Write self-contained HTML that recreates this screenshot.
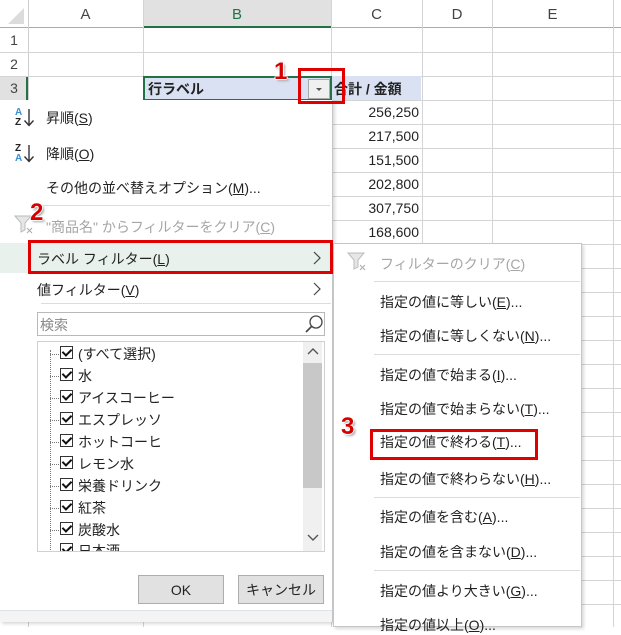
<!DOCTYPE html>
<html><head><meta charset="utf-8"><style>
*{margin:0;padding:0;box-sizing:border-box}
body{width:621px;height:627px;overflow:hidden;background:#fff;position:relative;font-family:"Liberation Sans","Noto Sans CJK JP",sans-serif;font-size:14px;color:#222}
.a{position:absolute}
.hl{position:absolute;height:1px;background:#d4d4d4}
.vl{position:absolute;width:1px;background:#d4d4d4}
.ch{position:absolute;top:0;height:28px;line-height:30px;text-align:center;font-size:15px;color:#444}
.rh{position:absolute;left:0;width:28px;text-align:center;font-size:14px;color:#444}
.num{position:absolute;left:331px;width:88px;text-align:right;font-size:14px;color:#222}
.mi{position:absolute;white-space:nowrap;font-size:14px;color:#222}
.sep{position:absolute;height:1px;background:#dcdcdc}
.red{position:absolute;border:3px solid #e00000}
.badge{position:absolute;color:#d60000;font-weight:bold;font-size:24px;text-shadow:-1px 0 #fff,1px 0 #fff,0 1px #fff,0 -1px #fff,2px 2px 2px #aaa}
.cb{position:absolute;left:60px;width:13px;height:13px;border:1px solid #333;background:#fff}
.cb:after{content:"";position:absolute;left:3px;top:0px;width:4px;height:7px;border:solid #111;border-width:0 2px 2px 0;transform:rotate(45deg)}
.li{position:absolute;left:78px;font-size:14px}
.dot{position:absolute;left:50px;width:9px;border-top:1px dotted #777}
.btn{position:absolute;top:575px;height:29px;background:#e1e1e1;border:1px solid #adadad;text-align:center;line-height:28px;font-size:14px}
</style></head><body>
<div class="a" style="left:0;top:0;width:621px;height:28px;background:#fff;border-bottom:1px solid #ababab"></div>
<div class="a" style="left:8px;top:8px;width:0;height:0;border-left:16px solid transparent;border-bottom:16px solid #dcdcdc"></div>
<div class="a" style="left:143px;top:0;width:188px;height:28px;background:#e1e1e1;border-bottom:2px solid #217346"></div>
<div class="ch" style="left:28px;width:115px">A</div>
<div class="ch" style="left:143px;width:188px;color:#217346">B</div>
<div class="ch" style="left:331px;width:91px">C</div>
<div class="ch" style="left:422px;width:70px">D</div>
<div class="ch" style="left:492px;width:121px">E</div>
<div class="vl" style="left:28px;top:0;height:627px;background:#cfcfcf"></div>
<div class="vl" style="left:143px;top:0;height:627px"></div>
<div class="vl" style="left:331px;top:0;height:627px"></div>
<div class="vl" style="left:422px;top:0;height:627px"></div>
<div class="vl" style="left:492px;top:0;height:627px"></div>
<div class="vl" style="left:613px;top:0;height:627px"></div>
<div class="hl" style="left:0;top:52px;width:621px"></div>
<div class="hl" style="left:0;top:76px;width:621px"></div>
<div class="hl" style="left:0;top:100px;width:621px"></div>
<div class="hl" style="left:0;top:124px;width:621px"></div>
<div class="hl" style="left:0;top:148px;width:621px"></div>
<div class="hl" style="left:0;top:172px;width:621px"></div>
<div class="hl" style="left:0;top:196px;width:621px"></div>
<div class="hl" style="left:0;top:220px;width:621px"></div>
<div class="hl" style="left:0;top:244px;width:621px"></div>
<div class="hl" style="left:0;top:268px;width:621px"></div>
<div class="hl" style="left:0;top:292px;width:621px"></div>
<div class="hl" style="left:0;top:316px;width:621px"></div>
<div class="hl" style="left:0;top:340px;width:621px"></div>
<div class="hl" style="left:0;top:364px;width:621px"></div>
<div class="hl" style="left:0;top:388px;width:621px"></div>
<div class="hl" style="left:0;top:412px;width:621px"></div>
<div class="hl" style="left:0;top:436px;width:621px"></div>
<div class="hl" style="left:0;top:460px;width:621px"></div>
<div class="hl" style="left:0;top:484px;width:621px"></div>
<div class="hl" style="left:0;top:508px;width:621px"></div>
<div class="hl" style="left:0;top:532px;width:621px"></div>
<div class="hl" style="left:0;top:556px;width:621px"></div>
<div class="hl" style="left:0;top:580px;width:621px"></div>
<div class="hl" style="left:0;top:604px;width:621px"></div>
<div class="rh" style="top:32px">1</div>
<div class="rh" style="top:56px">2</div>
<div class="a" style="left:0;top:77px;width:28px;height:23px;background:#e1e1e1;border-right:2px solid #217346"></div>
<div class="rh" style="top:80px">3</div>
<div class="a" style="left:143px;top:76px;width:278px;height:24px;background:#d9e1f2"></div>
<div class="a" style="left:143px;top:76px;width:189px;height:25px;border:2px solid #217346"></div>
<div class="a" style="left:148px;top:79px;font-weight:bold;font-size:14px">行ラベル</div>
<div class="a" style="left:334px;top:79px;font-weight:bold;font-size:14px;white-space:nowrap">合計 / 金額</div>
<div class="a" style="left:308px;top:79px;width:22px;height:20px;background:#f0f0f0;border:1px solid #aaa"></div>
<div class="a" style="left:316px;top:88px;border-left:3px solid transparent;border-right:3px solid transparent;border-top:3px solid #555"></div>
<div class="num" style="top:104px">256,250</div>
<div class="num" style="top:128px">217,500</div>
<div class="num" style="top:152px">151,500</div>
<div class="num" style="top:176px">202,800</div>
<div class="num" style="top:200px">307,750</div>
<div class="num" style="top:224px">168,600</div>
<!-- main menu -->
<div class="a" style="left:0;top:100px;width:333px;height:522px;background:#fff;border-right:1px solid #c6c6c6;border-bottom:1px solid #c6c6c6;box-shadow:2px 2px 3px rgba(0,0,0,.15)"></div>
<div class="a" style="left:15px;top:108px;font-size:10px;line-height:10px;font-weight:bold"><span style="color:#3b8ed8">A</span><br>Z</div>
<svg class="a" style="left:23px;top:108px" width="12" height="20"><path d="M6 1v16M1.5 12.5L6 17.5l4.5-5" fill="none" stroke="#333" stroke-width="1.4"/></svg>
<div class="mi" style="left:46px;top:108px">昇順(<u>S</u>)</div>
<div class="a" style="left:15px;top:144px;font-size:10px;line-height:10px;font-weight:bold">Z<br><span style="color:#3b8ed8">A</span></div>
<svg class="a" style="left:23px;top:144px" width="12" height="20"><path d="M6 1v16M1.5 12.5L6 17.5l4.5-5" fill="none" stroke="#333" stroke-width="1.4"/></svg>
<div class="mi" style="left:46px;top:144px">降順(<u>O</u>)</div>
<div class="mi" style="left:46px;top:178px">その他の並べ替えオプション(<u>M</u>)...</div>
<div class="sep" style="left:30px;top:205px;width:300px"></div>
<svg class="a" style="left:14px;top:215px" width="22" height="20"><path d="M1 1h16l-6 7v7l-4 2v-9z" fill="#e6e6e6" stroke="#bbb"/><path d="M13 13l5 5M18 13l-5 5" stroke="#aaa"/></svg>
<div class="mi" style="left:46px;top:217px;color:#a6a6a6">"商品名" からフィルターをクリア(<u>C</u>)</div>
<div class="a" style="left:0;top:243px;width:332px;height:30px;background:#e8f1ec"></div>
<div class="mi" style="left:37px;top:249px">ラベル フィルター(<u>L</u>)</div>
<svg class="a" style="left:313px;top:251px" width="8" height="14"><path d="M1 1l6 6-6 6" fill="none" stroke="#444" stroke-width="1.2"/></svg>
<div class="mi" style="left:37px;top:280px">値フィルター(<u>V</u>)</div>
<svg class="a" style="left:313px;top:282px" width="8" height="14"><path d="M1 1l6 6-6 6" fill="none" stroke="#444" stroke-width="1.2"/></svg>
<div class="sep" style="left:41px;top:303px;width:290px"></div>
<div class="a" style="left:37px;top:312px;width:288px;height:24px;border:1px solid #b9b9b9"></div>
<div class="mi" style="left:40px;top:315px;color:#888">検索</div>
<svg class="a" style="left:304px;top:314px" width="20" height="20"><circle cx="12" cy="8" r="6" fill="none" stroke="#444" stroke-width="1.3"/><path d="M7.5 12.5L2 18" stroke="#444" stroke-width="1.6"/></svg>
<div class="a" style="left:37px;top:341px;width:288px;height:211px;border:1px solid #d0d0d0"></div>
<div class="a" style="left:303px;top:342px;width:19px;height:209px;background:#f0f0f0"></div>
<div class="a" style="left:303px;top:363px;width:19px;height:125px;background:#c8c8c8"></div>
<svg class="a" style="left:307px;top:348px" width="12" height="8"><path d="M1 6l5-5 5 5" fill="none" stroke="#555" stroke-width="1.4"/></svg>
<svg class="a" style="left:307px;top:534px" width="12" height="8"><path d="M1 1l5 5 5-5" fill="none" stroke="#555" stroke-width="1.4"/></svg>
<div class="a" style="left:50px;top:350px;height:200px;border-left:1px dotted #777"></div>
<div class="dot" style="top:354px"></div><div class="cb" style="top:346px"></div><div class="li" style="top:344px">(すべて選択)</div>
<div class="dot" style="top:376px"></div><div class="cb" style="top:368px"></div><div class="li" style="top:366px">水</div>
<div class="dot" style="top:398px"></div><div class="cb" style="top:390px"></div><div class="li" style="top:388px">アイスコーヒー</div>
<div class="dot" style="top:420px"></div><div class="cb" style="top:412px"></div><div class="li" style="top:410px">エスプレッソ</div>
<div class="dot" style="top:442px"></div><div class="cb" style="top:434px"></div><div class="li" style="top:432px">ホットコーヒ</div>
<div class="dot" style="top:464px"></div><div class="cb" style="top:456px"></div><div class="li" style="top:454px">レモン水</div>
<div class="dot" style="top:486px"></div><div class="cb" style="top:478px"></div><div class="li" style="top:476px">栄養ドリンク</div>
<div class="dot" style="top:508px"></div><div class="cb" style="top:500px"></div><div class="li" style="top:498px">紅茶</div>
<div class="dot" style="top:530px"></div><div class="cb" style="top:522px"></div><div class="li" style="top:520px">炭酸水</div>
<div class="a" style="left:55px;top:543px;width:248px;height:8px;overflow:hidden"><div class="cb" style="left:5px;top:0"></div><div class="li" style="left:23px;top:-2px">日本酒</div></div>
<div class="btn" style="left:138px;width:86px">OK</div>
<div class="btn" style="left:238px;width:86px">キャンセル</div>
<div class="a" style="left:0;top:610px;width:332px;height:1px;background:#dde3ea"></div>
<div class="a" style="left:0;top:611px;width:332px;height:11px;background:#f4f4f4"></div>
<!-- submenu -->
<div class="a" style="left:333px;top:243px;width:249px;height:384px;background:#fff;border:1px solid #c6c6c6;box-shadow:2px 2px 3px rgba(0,0,0,.15)"></div>
<svg class="a" style="left:347px;top:252px" width="22" height="20"><path d="M1 1h16l-6 7v7l-4 2v-9z" fill="#e6e6e6" stroke="#bbb"/><path d="M13 13l5 5M18 13l-5 5" stroke="#aaa"/></svg>
<div class="mi" style="left:380px;top:254px;color:#a6a6a6">フィルターのクリア(<u>C</u>)</div>
<div class="sep" style="left:374px;top:281px;width:206px"></div>
<div class="mi" style="left:380px;top:292px">指定の値に等しい(<u>E</u>)...</div>
<div class="mi" style="left:380px;top:326px">指定の値に等しくない(<u>N</u>)...</div>
<div class="sep" style="left:374px;top:354px;width:206px"></div>
<div class="mi" style="left:380px;top:365px">指定の値で始まる(<u>I</u>)...</div>
<div class="mi" style="left:380px;top:399px">指定の値で始まらない(<u>T</u>)...</div>
<div class="mi" style="left:380px;top:432px">指定の値で終わる(<u>T</u>)...</div>
<div class="mi" style="left:380px;top:469px">指定の値で終わらない(<u>H</u>)...</div>
<div class="sep" style="left:374px;top:497px;width:206px"></div>
<div class="mi" style="left:380px;top:507px">指定の値を含む(<u>A</u>)...</div>
<div class="mi" style="left:380px;top:542px">指定の値を含まない(<u>D</u>)...</div>
<div class="sep" style="left:374px;top:570px;width:206px"></div>
<div class="mi" style="left:380px;top:581px">指定の値より大きい(<u>G</u>)...</div>
<div class="mi" style="left:380px;top:615px">指定の値以上(<u>O</u>)...</div>
<div class="red" style="left:298px;top:68px;width:47px;height:36px"></div>
<div class="red" style="left:28px;top:240px;width:305px;height:34px"></div>
<div class="red" style="left:370px;top:429px;width:168px;height:31px"></div>
<div class="badge" style="left:274px;top:58px">1</div>
<div class="badge" style="left:30px;top:199px">2</div>
<div class="badge" style="left:341px;top:413px">3</div>
</body></html>
